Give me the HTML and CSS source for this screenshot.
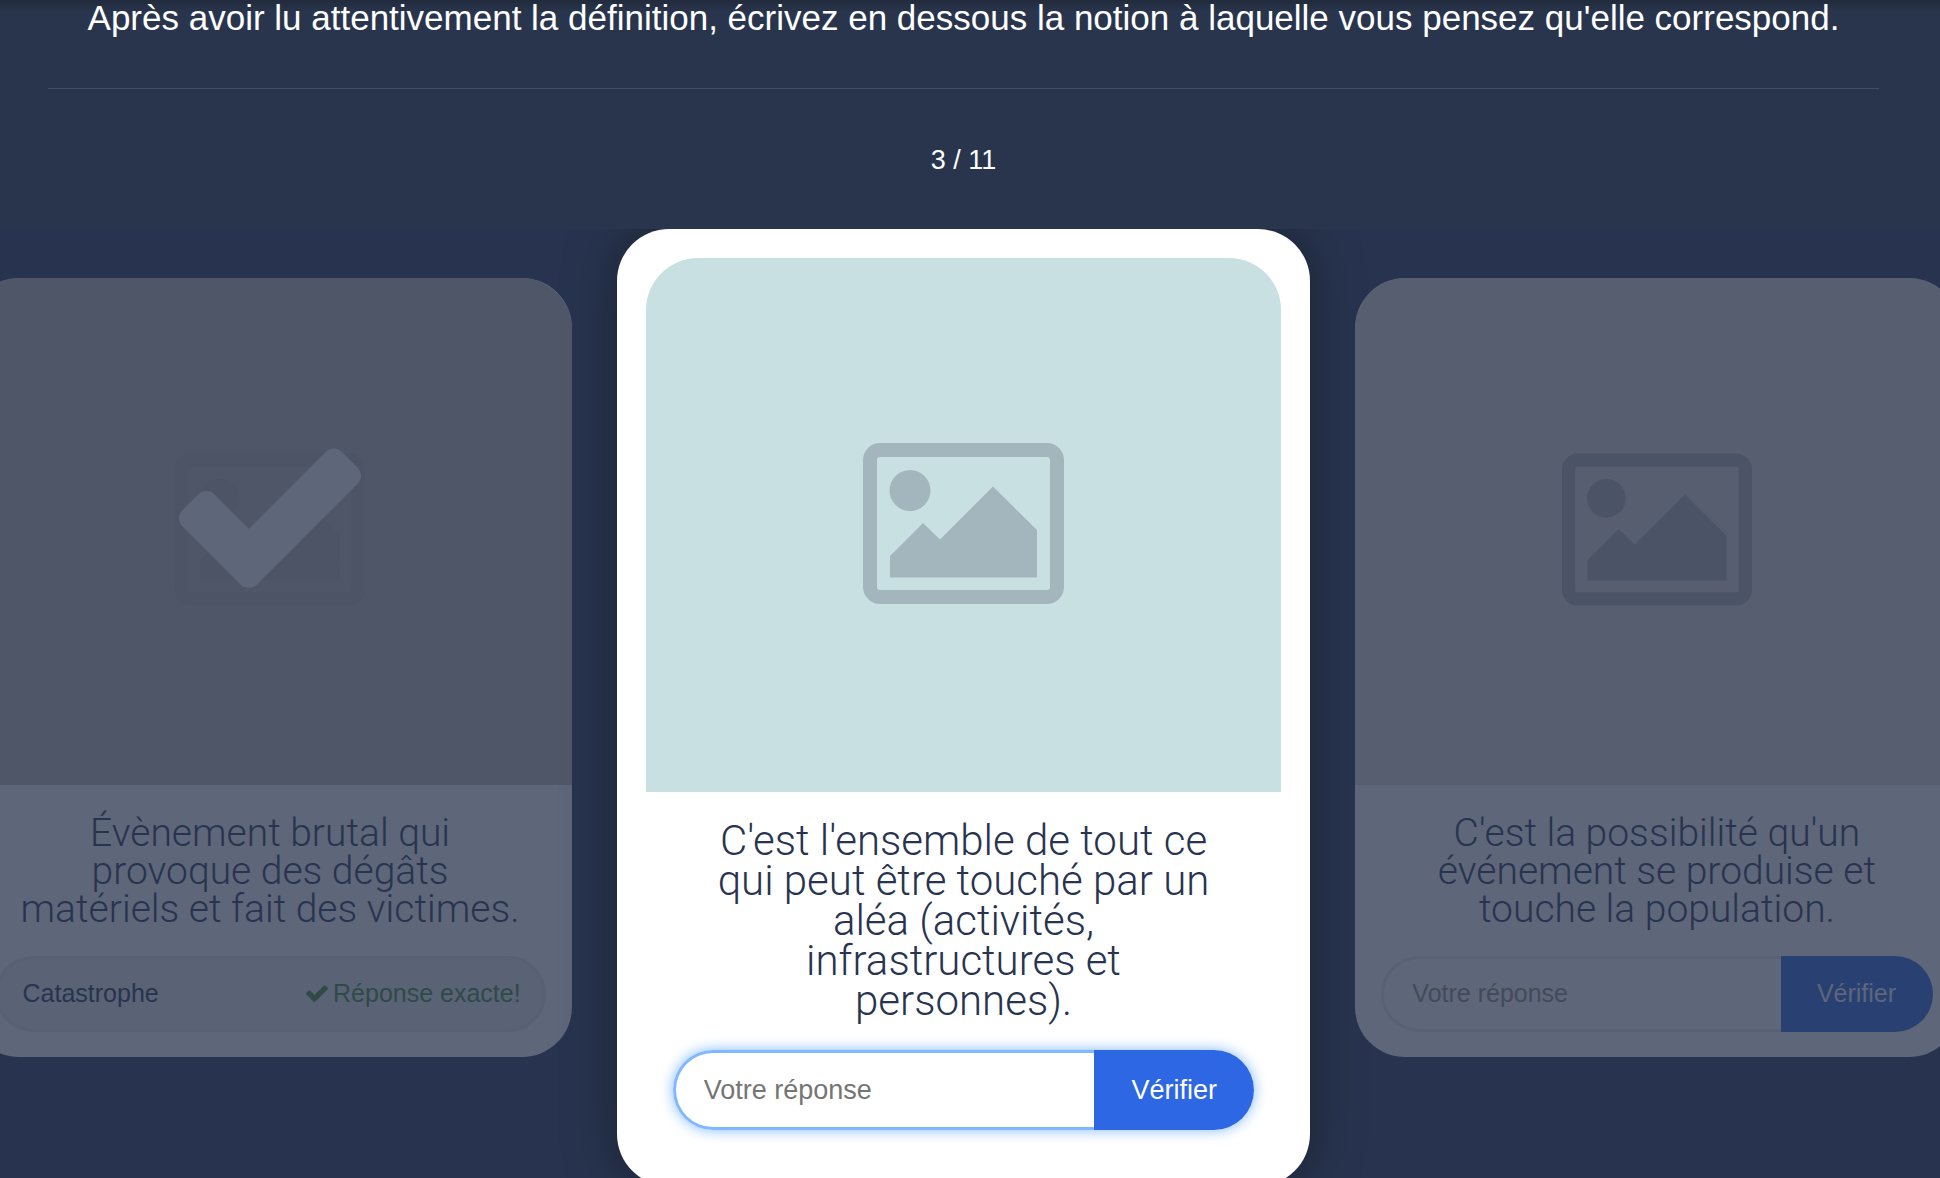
FILE: index.html
```html
<!DOCTYPE html>
<html lang="fr">
<head>
  <meta charset="UTF-8" />
  <meta name="viewport" content="width=device-width, initial-scale=1.0"/>
  <title>Définitions</title>
  <link rel="stylesheet" href="styles.css">
</head>
<body>
  <!-- Icons -->
  <svg class="sprite" aria-hidden="true">
    <symbol id="icon-image" viewBox="0 0 201 161">
      <path fill-rule="evenodd" d="M17 0H184a17 17 0 0 1 17 17V144a17 17 0 0 1-17 17H17a17 17 0 0 1-17-17V17a17 17 0 0 1 17-17zM17 14a3 3 0 0 0-3 3V144a3 3 0 0 0 3 3H184a3 3 0 0 0 3-3V17a3 3 0 0 0-3-3z"/>
      <circle cx="47" cy="47.500" r="20.500"/>
      <path d="M27 113L60 80L77 96.500L130 43.500L174 87V134.500H27z"/>
    </symbol>
    <symbol id="icon-check" viewBox="121 314 1550 1208">
      <path d="M1671 566q0 40-28 68l-724 724-136 136q-28 28-68 28t-68-28l-136-136-362-362q-28-28-28-68t28-68l136-136q28-28 68-28t68 28l294 295 656-657q28-28 68-28t68 28l136 136q28 28 28 68z"/>
    </symbol>
  </svg>

  <header class="intro">
    <p>Après avoir lu attentivement la définition, écrivez en dessous la notion à laquelle vous pensez qu'elle correspond.</p>
  </header>

  <p class="counter">3 / 11</p>

  <main class="slider">
    <!-- Previous card, already answered -->
    <article class="card side done">
      <div class="picture">
        <svg class="icon-image"><use href="#icon-image"/></svg>
        <svg class="icon-check"><use href="#icon-check"/></svg>
      </div>
      <p class="definition">Évènement brutal qui provoque des dégâts matériels et fait des victimes.</p>
      <div class="answer">
        <span>Catastrophe</span>
        <span class="result"><svg class="result-icon"><use href="#icon-check"/></svg>Réponse exacte!</span>
      </div>
    </article>

    <!-- Current card -->
    <article class="card current">
      <div class="picture">
        <svg class="icon-image"><use href="#icon-image"/></svg>
      </div>
      <p class="definition">C'est l'ensemble de tout ce qui peut être touché par un aléa (activités, infrastructures et personnes).</p>
      <form class="answer">
        <input type="text" placeholder="Votre réponse" aria-label="Votre réponse" />
        <button type="button">Vérifier</button>
      </form>
    </article>

    <!-- Next card -->
    <article class="card side">
      <div class="picture">
        <svg class="icon-image"><use href="#icon-image"/></svg>
      </div>
      <p class="definition">C'est la possibilité qu'un événement se produise et touche la population.</p>
      <form class="answer">
        <input type="text" placeholder="Votre réponse" aria-label="Votre réponse" />
        <button type="button">Vérifier</button>
      </form>
    </article>
  </main>
</body>
</html>
```

FILE: styles.css
```css
* {
  box-sizing: border-box;
}

body {
  margin: 0;
  height: 100vh;
  overflow: hidden;
  display: flex;
  flex-direction: column;
  font-family: "Liberation Sans", Arial, sans-serif;
  background: #29354d linear-gradient(#212b3c, #29354d) no-repeat top / 100% 12px;
  color: white;
}

p {
  margin: 0;
}

svg {
  display: block;
  fill: currentColor;
}

.sprite {
  position: absolute;
  width: 0;
  height: 0;
}

.intro {
  margin: 0 61px 0 48px;
  padding-bottom: 52px;
  border-bottom: 1px solid #434d60;
  font-size: 35px;
  line-height: 36px;
  text-align: center;
  white-space: nowrap;
}

.counter {
  padding: 56px 13px 53px 0;
  font-size: 27px;
  line-height: 31px;
  text-align: center;
}

.slider {
  flex: 1;
  display: flex;
  justify-content: center;
  align-items: flex-start;
  gap: 45px;
  padding-right: 13px;
  overflow: hidden;
  background-color: #28344f;
}

.card {
  flex: none;
  color: #28344f;
  text-align: center;
}

.current {
  width: 36%;
  padding: 29px 29px 56px;
  border-radius: 52px;
  background-color: white;
  box-shadow: 0 0 45px 5px #1c2636;
}

.side {
  width: 31.3%;
  margin-top: 49px;
  padding-bottom: 25px;
  border-radius: 50px;
  background-color: #5e6679;
}

.picture {
  position: relative;
  display: flex;
  align-items: center;
  justify-content: center;
  aspect-ratio: 25 / 21;
  border-radius: 52px 52px 0 0;
  background-color: #c8e0e1;
  color: #a4b6bd;
}

.side .picture {
  background-color: #565e70;
  color: #4b5366;
}

.done .picture {
  background-color: #4e5668;
  color: #4c5465;
}

.icon-image {
  width: 201px;
  height: 161px;
  margin-bottom: 4px;
}

.side .icon-image {
  width: 190px;
  height: 153px;
}

.icon-check {
  position: absolute;
  top: 168px;
  width: 182px;
  height: 142px;
  color: #5e6679;
}

.definition {
  padding: 29px 70px;
  font-family: Roboto, "Liberation Sans", sans-serif;
  font-weight: 300;
  font-size: 42px;
  line-height: 40px;
}

.side .definition {
  padding: 29px 45px 28px;
  font-size: 39px;
  line-height: 38px;
}

.answer {
  display: flex;
  align-items: stretch;
  justify-content: space-between;
  height: 80px;
  margin: 0 27px;
  border-radius: 40px;
  font-size: 27px;
  box-shadow: 0 0 14px #80b8ff;
}

.side .answer {
  height: 76px;
  margin: 0 26px;
  font-size: 25px;
  box-shadow: none;
}

.answer input {
  flex: 1;
  min-width: 0;
  padding: 0 28px;
  border: 3px solid #80b8ff;
  border-right: none;
  border-radius: 40px 0 0 40px;
  background-color: white;
  font: inherit;
  color: #28344f;
}

.answer input::placeholder {
  color: #757575;
}

.side .answer input {
  border-color: #596175;
  background-color: #5e6679;
}

.side .answer input::placeholder {
  color: #434a5a;
}

.answer button {
  width: 160px;
  border: none;
  border-radius: 0 40px 40px 0;
  background-color: #2e67e4;
  font: inherit;
  color: white;
  cursor: pointer;
}

.side .answer button {
  width: 152px;
  background-color: #294073;
  color: #5e6679;
}

.done .answer {
  align-items: center;
  padding: 0 22px 0 25px;
  border: 3px solid #586073;
  background-color: #5a6276;
}

.result {
  display: flex;
  align-items: center;
  gap: 5px;
  color: #2f4a47;
}

.result-icon {
  width: 22px;
  height: 17px;
}
```
